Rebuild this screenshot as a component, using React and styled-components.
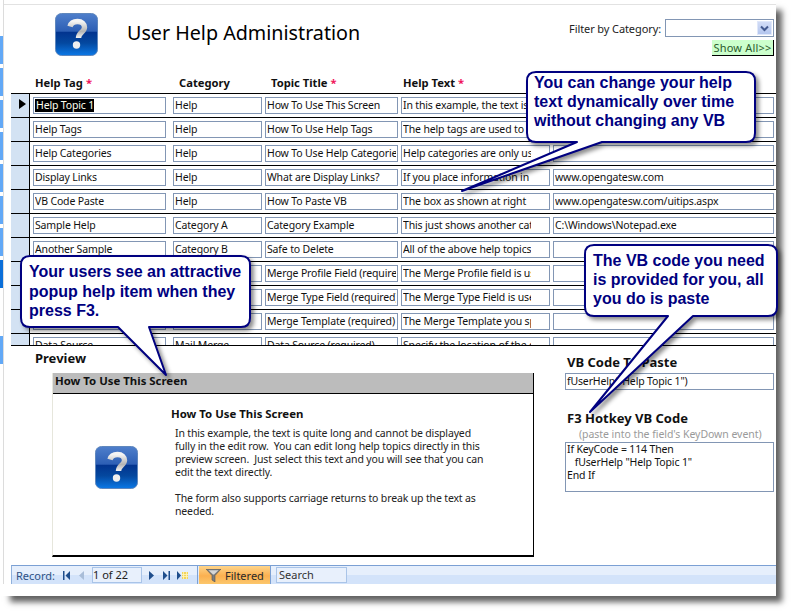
import React from "react";
import styled, { createGlobalStyle } from "styled-components";

const Global = createGlobalStyle`
  html, body { margin: 0; padding: 0; background: #fff; overflow: hidden; }
  #root { width: 792px; height: 612px; }
  * { box-sizing: border-box; }
`;

const UI = `"Noto Sans", "Liberation Sans", sans-serif`;

const Page = styled.div`
  width: 792px; height: 612px; background: #fff; font-family: ${UI}; font-size: 10.5px; letter-spacing: -.15px; color: #111;
`;
const Window = styled.div`
  position: relative; width: 776px; height: 596px; background: #fff; display: flex; flex-direction: column;
  box-shadow: 8px 8px 6px -2px rgba(0,0,0,.62);
`;
const WindowBody = styled.div`display: flex; height: 584px;`;
const Rail = styled.div`
  width: 4px; flex: none; border-right: 1px solid #dcdcdc; padding-top: 36px; display: flex; flex-direction: column; gap: 4px;
`;
const RailTab = styled.div`
  width: 3px; height: 28px; flex: none; background: ${p => (p.$active ? "#0b6fd9" : "#62a8f6")};
  margin-top: ${p => (p.$apart ? "44px" : "0")};
`;
const Form = styled.div`
  flex: 1; min-width: 0; margin-top: 4px; border-top: 1px solid #e2e2e2; display: flex; flex-direction: column;
`;
const Header = styled.header`height: 70px; flex: none; display: flex; align-items: flex-start;`;
const LogoWrap = styled.div`margin: 8px 0 0 51px; width: 43px; height: 43px; flex: none;`;
const Title = styled.h1`
  margin: 14px 0 0 29px; font-size: 19.7px; letter-spacing: 0; line-height: 28px; font-weight: 400; color: #000; white-space: nowrap; flex: 1;
`;
const FilterPanel = styled.div`
  width: 206px; margin-right: 2px; display: flex; flex-direction: column; align-items: flex-end; padding-top: 14px;
`;
const FilterRow = styled.div`display: flex; align-items: center; gap: 4px; height: 18px;`;
const FilterLabel = styled.span`font-size: 11px; letter-spacing: -.1px; color: #222; white-space: nowrap;`;
const Combo = styled.div`
  width: 109px; height: 18px; border: 1px solid #8296b4; background: #fff; display: flex; justify-content: flex-end; padding: 1px;
`;
const ComboButton = styled.div`
  width: 15px; background: linear-gradient(#d2dcf6, #b4c6ee); display: flex; align-items: center; justify-content: center; border: 1px solid #dfe7fa;
`;
const ShowAll = styled.div`
  margin-top: 3px; width: 62px; height: 16px; background: #ccffcc; border-right: 1px solid #000; border-bottom: 1px solid #000;
  font-size: 11px; line-height: 15px; color: #2b5a2b; text-align: center; white-space: nowrap; letter-spacing: .2px;
`;
const Columns = `19px 3px 133px 7px 89px 3px 133px 3px 149px 3px 221px`;
const HeadRow = styled.div`
  height: 18px; flex: none; margin-left: 7px; padding-bottom: 4px; display: grid; grid-template-columns: ${Columns}; align-items: center;
`;
const HeadCell = styled.div`
  grid-column: ${p => p.$col}; font-weight: 700; font-size: 11.2px; letter-spacing: 0; color: #111; padding-left: ${p => p.$pl}px; white-space: nowrap;
`;
const Star = styled.span`color: #f0145a; margin-left: 3px;`;
const TableBody = styled.div`
  height: 253px; flex: none; margin-left: 7px; overflow: hidden; border-bottom: 1px solid #000;
`;
const Row = styled.div`
  height: 24px; display: grid; grid-template-columns: ${Columns}; border-top: 1px solid #000; align-items: start;
`;
const Selector = styled.div`
  grid-column: 1; height: 23px; background: #d3e2f3; border-right: 1px solid #000; padding: 4px 0 0 8px;
`;
const Field = styled.div`
  height: 17px; margin-top: 3px; border: 1px solid #8296b4; background: #fff; line-height: 14px;
  padding: 0 ${p => (p.$pad ? "18px" : "1px")} 0 1px; white-space: nowrap; color: #111;
  grid-column: ${p => p.$col};
`;
const FieldClip = styled.div`height: 100%; overflow: hidden;`;
const Selected = styled.span`display: inline-block; line-height: 13px; background: #000; color: #ffe; padding: 0 0 0 1px;`;
const PreviewArea = styled.section`height: 219px; flex: none; display: flex;`;
const PreviewLeft = styled.div`width: 561px; flex: none; padding-left: 31px;`;
const SectionHeading = styled.div`
  font-weight: 700; font-size: 13px; letter-spacing: 0; line-height: 16px; color: #111; white-space: nowrap;
`;
const PreviewHeading = styled(SectionHeading)`height: 27px; padding-top: 4px;`;
const Card = styled.div`
  margin-left: 17px; width: 482px; height: 184px; border-left: 1px solid #e6e6dc; border-right: 1px solid #000; border-bottom: 2px solid #000;
  display: flex; flex-direction: column;
`;
const CardHead = styled.div`
  height: 21px; flex: none; background: #bcbcbc; border-bottom: 1px solid #000; font-weight: 700; font-size: 11.4px; letter-spacing: 0; line-height: 15px; padding-left: 2px;
`;
const CardBody = styled.div`flex: 1; display: flex;`;
const CardIcon = styled.div`width: 118px; flex: none; padding: 52px 0 0 42px;`;
const CardCopy = styled.div`flex: 1; padding-top: 13px;`;
const CardTitle = styled.div`font-weight: 700; font-size: 11.4px; letter-spacing: 0; line-height: 13px;`;
const CardText = styled.div`margin: 7px 0 0 4px; line-height: 13px; white-space: pre; color: #222;`;
const PreviewRight = styled.div`flex: 1; display: flex; flex-direction: column; align-items: flex-start;`;
const RightHeading = styled(SectionHeading)`margin-left: 2px; height: 27px; padding-top: 8px;`;
const SideField = styled.div`
  width: 209px; border: 1px solid #8296b4; background: #fff; padding-left: 1px; line-height: 14px; color: #111;
  height: ${p => p.$h}px; white-space: pre;
`;
const CodeField = styled(SideField)`line-height: 13px;`;
const HotkeyHeading = styled(SectionHeading)`margin: 20px 0 0 2px; height: 17px;`;
const HotkeyHint = styled.div`margin-left: 14px; height: 15px; line-height: 15px; letter-spacing: -.05px; color: #9a9a9a; white-space: nowrap;`;
const StatusBar = styled.footer`
  height: 19px; flex: none; margin-left: 7px; display: flex; border-top: 1px solid #7ba0d4; border-left: 1px solid #8fb0dc;
  background: linear-gradient(#e6effc 0, #e6effc 50%, #d3e3fa 50%, #d3e3fa 100%); color: #2f5285; font-size: 11px; letter-spacing: 0;
`;
const RecordGroup = styled.div`
  width: 186px; flex: none; height: 100%; display: flex; align-items: center; border-right: 1px solid #7ba0d4; padding-left: 4px;
`;
const RecordLabel = styled.span`width: 46px; flex: none; white-space: nowrap;`;
const NavSlot = styled.span`
  display: flex; align-items: center; justify-content: center; flex: none; width: ${p => p.$w}px; height: 100%;
`;
const RecordInput = styled.div`
  width: 50px; height: 16px; flex: none; background: #e8f0fc; border: 1px solid #a9c4e8; line-height: 14px; color: #222;
  margin: 0 2px 0 0;
`;
const FilterButton = styled.div`
  margin-left: 1px; width: 72px; flex: none; height: 100%; display: flex; align-items: center; gap: 4px; padding-left: 7px;
  background: linear-gradient(#fdd48a, #fbb050 55%, #fcc76c); border-right: 1px solid #7ba0d4; color: #2a2a2a;
`;
const SearchBox = styled.div`
  margin: 0 0 0 5px; width: 71px; height: 16px; align-self: center; background: #e8f0fc; border: 1px solid #a9c4e8; padding-left: 2px; line-height: 14px; color: #333;
`;
const BubbleBox = styled.div`
  position: absolute; left: ${p => p.$x}px; top: ${p => p.$y}px; width: ${p => p.$w}px; height: ${p => p.$h}px;
  padding: ${p => p.$pt}px 0 0 ${p => p.$pl}px;
`;
const BubbleShape = styled.svg`
  position: absolute; left: 0; top: 0; overflow: visible; filter: drop-shadow(3px 3px 2px rgba(0,0,0,.45));
`;
const BubbleText = styled.div`
  position: relative; font-family: "Liberation Sans", Arial, sans-serif; font-weight: 700; font-size: 16px; letter-spacing: 0;
  line-height: ${p => p.$lh}px; color: #00007f; white-space: pre;
`;

function HelpIcon() {
  return (
    <svg width="43" height="43" viewBox="0 0 43 43">
      <defs>
        <linearGradient id="bg" x1="0" y1="0" x2="0" y2="1">
          <stop offset="0" stopColor="#4f7fcb" />
          <stop offset=".42" stopColor="#2d5fb5" />
          <stop offset=".45" stopColor="#02348f" />
          <stop offset=".7" stopColor="#04489f" />
          <stop offset="1" stopColor="#0b78e6" />
        </linearGradient>
        <linearGradient id="mark" x1="0" y1="0" x2="0" y2="1">
          <stop offset="0" stopColor="#f4f4f4" />
          <stop offset=".6" stopColor="#b4b4b4" />
          <stop offset="1" stopColor="#f2f2f2" />
        </linearGradient>
      </defs>
      <rect x=".5" y=".5" width="42" height="42" rx="6" fill="url(#bg)" stroke="#5f87bd" />
      <path d="M15 13.5c1-3.500 4-5 7.500-5 4.500 0 7 2.500 7 5.800 0 5-6 5.200-6 10.700" fill="none" stroke="url(#mark)" strokeWidth="5.400" strokeLinecap="butt" />
      <circle cx="21.500" cy="32" r="3.700" fill="#efefef" />
    </svg>
  );
}

const Chevron = () => (
  <svg width="9" height="7" viewBox="0 0 9 7"><path d="M1 1.500 4.500 5 8 1.500" fill="none" stroke="#43598f" strokeWidth="2" /></svg>
);
const Pointer = () => (
  <svg width="7" height="10" viewBox="0 0 7 10"><path d="M0 0 7 5 0 10Z" fill="#000" /></svg>
);
const First = () => (
  <svg width="7" height="9" viewBox="0 0 7 9"><path d="M0 0h1.500v9H0Z M7 0v9L2.500 4.500Z" fill="#1f4e8c" /></svg>
);
const Prev = () => (
  <svg width="5" height="9" viewBox="0 0 5 9"><path d="M5 0v9L0 4.500Z" fill="#a9bdd8" /></svg>
);
const Next = () => (
  <svg width="5" height="9" viewBox="0 0 5 9"><path d="M0 0v9L5 4.500Z" fill="#1f4e8c" /></svg>
);
const Last = () => (
  <svg width="7" height="9" viewBox="0 0 7 9"><path d="M0 0v9L4.500 4.500Z M5.500 0H7v9H5.500Z" fill="#1f4e8c" /></svg>
);
const NewRec = () => (
  <svg width="11" height="9" viewBox="0 0 11 9">
    <path d="M0 0v9L4 4.500Z" fill="#1f4e8c" />
    <path d="M5 1h6v7H5Z" fill="#f2d45c" />
    <path d="M6.500 1v7M9.500 1v7M5 3.500h6M5 5.500h6" stroke="#fff6c0" strokeWidth=".8" />
  </svg>
);
const Funnel = () => (
  <svg width="15" height="13" viewBox="0 0 15 13">
    <path d="M0 0h15L9 6.500V13L6 11V6.500Z" fill="#7d7d7d" stroke="#555" strokeWidth=".6" />
    <path d="M2.500 1.200h10L8 5.500H7Z" fill="#d6d6d6" />
  </svg>
);

const rows = [
  ["Help Topic 1", "Help", "How To Use This Screen", "In this example, the text is quite long", ""],
  ["Help Tags", "Help", "How To Use Help Tags", "The help tags are used to identify", ""],
  ["Help Categories", "Help", "How To Use Help Categories", "Help categories are only used", ""],
  ["Display Links", "Help", "What are Display Links?", "If you place information in this", "www.opengatesw.com"],
  ["VB Code Paste", "Help", "How To Paste VB", "The box as shown at right", "www.opengatesw.com/uitips.aspx"],
  ["Sample Help", "Category A", "Category Example", "This just shows another category", "C:\\Windows\\Notepad.exe"],
  ["Another Sample", "Category B", "Safe to Delete", "All of the above help topics can", ""],
  ["Merge Profile", "Mail Merge", "Merge Profile Field (required)", "The Merge Profile field is used", ""],
  ["Merge Type", "Mail Merge", "Merge Type Field (required)", "The Merge Type Field is used", ""],
  ["Merge Template", "Mail Merge", "Merge Template (required)", "The Merge Template you specify", ""],
  ["Data Source", "Mail Merge", "Data Source (required)", "Specify the location of the data", ""],
];

const previewText = `In this example, the text is quite long and cannot be displayed
fully in the edit row.  You can edit long help topics directly in this
preview screen.  Just select this text and you will see that you can
edit the text directly.

The form also supports carriage returns to break up the text as
needed.`;

const bubbles = [
  { x: 527, y: 72, w: 228, h: 70, t1: 50, tip: [-65, 119], t2: 75, pt: 1, pl: 7, lh: 19, text: "You can change your help\ntext dynamically over time\nwithout changing any VB" },
  { x: 21, y: 256, w: 229, h: 71, t1: 97, tip: [145, 119], t2: 128, pt: 6, pl: 8, lh: 19.5, text: "Your users see an attractive\npopup help item when they\npress F3." },
  { x: 585, y: 245, w: 192, h: 71, t1: 83, tip: [5, 167], t2: 108, pt: 6, pl: 8, lh: 19, text: "The VB code you need\nis provided for you, all\nyou do is paste" },
];

function bubblePath({ w, h, t1, t2, tip }) {
  const r = 9;
  return `M${r} 0H${w - r}Q${w} 0 ${w} ${r}V${h - r}Q${w} ${h} ${w - r} ${h}H${t2}L${tip[0]} ${tip[1]}L${t1} ${h}H${r}Q0 ${h} 0 ${h - r}V${r}Q0 0 ${r} 0Z`;
}

function Bubble(b) {
  return (
    <BubbleBox $x={b.x} $y={b.y} $w={b.w} $h={b.h} $pt={b.pt} $pl={b.pl}>
      <BubbleShape width={b.w} height={b.h}>
        <path d={bubblePath(b)} fill="#fff" stroke="#000080" strokeWidth="2" strokeLinejoin="round" />
      </BubbleShape>
      <BubbleText $lh={b.lh}>{b.text}</BubbleText>
    </BubbleBox>
  );
}

export default function App() {
  return (
    <Page>
      <Global />
      <Window>
        <WindowBody>
          <Rail>
            {[0, 1, 2, 3, 4, 5, 6].map(i => <RailTab key={i} />)}
            <RailTab $active />
            <RailTab $apart />
          </Rail>
          <Form>
            <Header>
              <LogoWrap><HelpIcon /></LogoWrap>
              <Title>User Help Administration</Title>
              <FilterPanel>
                <FilterRow>
                  <FilterLabel>Filter by Category:</FilterLabel>
                  <Combo><ComboButton><Chevron /></ComboButton></Combo>
                </FilterRow>
                <ShowAll>Show All&gt;&gt;</ShowAll>
              </FilterPanel>
            </Header>
            <HeadRow>
              <HeadCell $col={3} $pl={2}>Help Tag<Star>*</Star></HeadCell>
              <HeadCell $col={5} $pl={6}>Category</HeadCell>
              <HeadCell $col={7} $pl={6}>Topic Title<Star>*</Star></HeadCell>
              <HeadCell $col={9} $pl={2}>Help Text<Star>*</Star></HeadCell>
            </HeadRow>
            <TableBody>
              {rows.map((r, i) => (
                <Row key={i}>
                  <Selector>{i === 0 && <Pointer />}</Selector>
                  <Field $col={3}><FieldClip>{i === 0 ? <Selected>{r[0]}</Selected> : r[0]}</FieldClip></Field>
                  <Field $col={5}><FieldClip>{r[1]}</FieldClip></Field>
                  <Field $col={7}><FieldClip>{r[2]}</FieldClip></Field>
                  <Field $col={9} $pad><FieldClip>{r[3]}</FieldClip></Field>
                  <Field $col={11}><FieldClip>{r[4]}</FieldClip></Field>
                </Row>
              ))}
            </TableBody>
            <PreviewArea>
              <PreviewLeft>
                <PreviewHeading>Preview</PreviewHeading>
                <Card>
                  <CardHead>How To Use This Screen</CardHead>
                  <CardBody>
                    <CardIcon><HelpIcon /></CardIcon>
                    <CardCopy>
                      <CardTitle>How To Use This Screen</CardTitle>
                      <CardText>{previewText}</CardText>
                    </CardCopy>
                  </CardBody>
                </Card>
              </PreviewLeft>
              <PreviewRight>
                <RightHeading>VB Code To Paste</RightHeading>
                <SideField $h={17}>fUserHelp("Help Topic 1")</SideField>
                <HotkeyHeading>F3 Hotkey VB Code</HotkeyHeading>
                <HotkeyHint>(paste into the field's KeyDown event)</HotkeyHint>
                <CodeField $h={50}>{`If KeyCode = 114 Then\n   fUserHelp "Help Topic 1"\nEnd If`}</CodeField>
              </PreviewRight>
            </PreviewArea>
            <StatusBar>
              <RecordGroup>
                <RecordLabel>Record:</RecordLabel>
                <NavSlot $w={8}><First /></NavSlot>
                <NavSlot $w={22}><Prev /></NavSlot>
                <RecordInput>1 of 22</RecordInput>
                <NavSlot $w={14}><Next /></NavSlot>
                <NavSlot $w={16}><Last /></NavSlot>
                <NavSlot $w={16}><NewRec /></NavSlot>
              </RecordGroup>
              <FilterButton><Funnel />Filtered</FilterButton>
              <SearchBox>Search</SearchBox>
            </StatusBar>
          </Form>
        </WindowBody>
        {bubbles.map((b, i) => <Bubble key={i} {...b} />)}
      </Window>
    </Page>
  );
}
